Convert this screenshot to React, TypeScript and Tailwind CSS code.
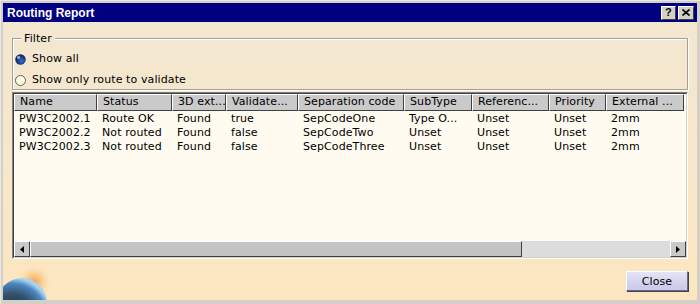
import React from "react";

const COLUMNS = [
  { label: "Name", w: "w-[83px]" },
  { label: "Status", w: "w-[75px]" },
  { label: "3D ext...", w: "w-[54px]" },
  { label: "Validate...", w: "w-[72px]" },
  { label: "Separation code", w: "w-[106px]" },
  { label: "SubType", w: "w-[68px]" },
  { label: "Referenc...", w: "w-[77px]" },
  { label: "Priority", w: "w-[57px]" },
  { label: "External ...", w: "w-[78px]" },
];

const ROWS = [
  ["PW3C2002.1", "Route OK", "Found", "true", "SepCodeOne", "Type O...", "Unset", "Unset", "2mm"],
  ["PW3C2002.2", "Not routed", "Found", "false", "SepCodeTwo", "Unset", "Unset", "Unset", "2mm"],
  ["PW3C2002.3", "Not routed", "Found", "false", "SepCodeThree", "Unset", "Unset", "Unset", "2mm"],
];

function Radio({ checked, label }: { checked?: boolean; label: string }) {
  return (
    <div className="h-[21px] flex items-center gap-[6px]">
      {checked ? (
        <svg width="11" height="11" viewBox="0 0 11 11">
          <defs>
            <radialGradient id="rb" cx="0.6" cy="0.65" r="0.7">
              <stop offset="0" stopColor="#3a70c8" />
              <stop offset="0.6" stopColor="#14357a" />
              <stop offset="1" stopColor="#0a1a40" />
            </radialGradient>
          </defs>
          <circle cx="5.5" cy="5.5" r="5.2" fill="url(#rb)" />
          <circle cx="3.6" cy="3.4" r="1.6" fill="#b8c8e0" opacity="0.8" />
        </svg>
      ) : (
        <svg width="11" height="11" viewBox="0 0 11 11">
          <circle cx="5.5" cy="5.5" r="5" fill="#fffbe0" stroke="#606060" strokeWidth="1" />
        </svg>
      )}
      <span>{label}</span>
    </div>
  );
}

function ArrowButton({ dir }: { dir: "left" | "right" }) {
  return (
    <div className="w-[16px] h-full bg-[#c8c8c8] border border-t-white border-l-white border-r-[#404040] border-b-[#404040] flex items-center justify-center">
      <svg width="4" height="7" viewBox="0 0 4 7">
        {dir === "left" ? <path d="M4 0 L0 3.5 L4 7 Z" fill="#000" /> : <path d="M0 0 L4 3.5 L0 7 Z" fill="#000" />}
      </svg>
    </div>
  );
}

export default function App() {
  return (
    <div className="w-[700px] h-[304px] bg-[#d4d0c8] border-t border-l border-t-[#e8e8e8] border-l-[#e8e8e8] flex flex-col pt-[2px] pl-[2px] pr-[3px] pb-[4px] font-['DejaVu_Sans',sans-serif] text-[11px] tracking-[0.1px] text-black">
      {/* title bar */}
      <div className="h-[19px] shrink-0 bg-[#000080] flex items-center justify-between pl-[4px] pr-[3px]">
        <span className="font-['Liberation_Sans',Arial,sans-serif] font-bold text-[12px] tracking-normal text-white leading-none">Routing Report</span>
        <div className="flex gap-[2px]">
          <div className="w-[15px] h-[14px] bg-[#d4d0c8] border border-t-white border-l-white border-r-[#404040] border-b-[#404040] flex items-center justify-center font-['Liberation_Sans',Arial,sans-serif] font-bold text-[11px] leading-none">
            ?
          </div>
          <div className="w-[16px] h-[14px] bg-[#d4d0c8] border border-t-white border-l-white border-r-[#404040] border-b-[#404040] flex items-center justify-center">
            <svg width="8" height="7" viewBox="0 0 8 7">
              <path d="M0.5 0.5 L7.5 6.5 M7.5 0.5 L0.5 6.5" stroke="#000" strokeWidth="1.6" />
            </svg>
          </div>
        </div>
      </div>

      {/* body */}
      <div className="relative flex-1 flex flex-col px-[9px] bg-gradient-to-b from-[#f3e7d0] via-[#f7e7cb] to-[#fde6bf] overflow-hidden">
        <svg className="absolute left-0 bottom-0" width="70" height="40" viewBox="0 0 70 40">
          <defs>
            <radialGradient id="glow" cx="0.5" cy="0.5" r="0.5">
              <stop offset="0" stopColor="#f59a38" stopOpacity="0.95" />
              <stop offset="0.45" stopColor="#f9bd72" stopOpacity="0.6" />
              <stop offset="1" stopColor="#fde6bf" stopOpacity="0" />
            </radialGradient>
            <radialGradient id="globe" cx="0.3" cy="0.8" r="0.8">
              <stop offset="0" stopColor="#1c2430" />
              <stop offset="0.6" stopColor="#34506c" />
              <stop offset="0.86" stopColor="#4a86bc" />
              <stop offset="1" stopColor="#a8d4f2" />
            </radialGradient>
          </defs>
          <circle cx="31" cy="22" r="18" fill="url(#glow)" />
          <circle cx="19" cy="43" r="25" fill="url(#globe)" />
        </svg>

        {/* filter group */}
        <div className="relative mt-[16px] h-[52px] shrink-0 border border-[#a0a0a0] shadow-[inset_1px_1px_0_#ffffff,1px_1px_0_#ffffff] pl-[2px] pt-[10px]">
          <span className="absolute -top-[7px] left-[8px] px-[3px] bg-[#f3e7d0] leading-[14px]">Filter</span>
          <Radio checked label="Show all" />
          <Radio label="Show only route to validate" />
        </div>

        {/* table */}
        <div className="relative mt-[2px] h-[167px] shrink-0 border border-t-[#808080] border-l-[#808080] border-r-white border-b-white">
          <div className="h-full border border-t-[#404040] border-l-[#404040] border-r-[#d4d0c8] border-b-[#d4d0c8] bg-[#fffbf0] flex flex-col">
            <div className="flex h-[17px] shrink-0">
              {COLUMNS.map((c) => (
                <div
                  key={c.label}
                  className={`${c.w} shrink-0 bg-[#cacaca] border border-t-white border-l-white border-r-[#404040] border-b-[#404040] pl-[5px] flex items-center whitespace-nowrap overflow-hidden`}
                >
                  {c.label}
                </div>
              ))}
            </div>
            <div className="flex-1 pt-[1px]">
              {ROWS.map((r) => (
                <div key={r[0]} className="flex h-[14px] items-center">
                  {r.map((v, i) => (
                    <div key={i} className={`${COLUMNS[i].w} shrink-0 pl-[5px] whitespace-nowrap overflow-hidden`}>
                      {v}
                    </div>
                  ))}
                </div>
              ))}
            </div>
            {/* horizontal scrollbar */}
            <div className="h-[16px] shrink-0 flex">
              <ArrowButton dir="left" />
              <div className="w-[492px] h-full bg-[#c4c4c4] border border-t-white border-l-white border-r-[#404040] border-b-[#404040]" />
              <div className="flex-1 h-full bg-[#dcdcdc]" />
              <ArrowButton dir="right" />
            </div>
          </div>
        </div>

        {/* footer */}
        <div className="flex justify-end mt-[12px]">
          <button className="w-[62px] h-[20px] bg-gradient-to-b from-[#e4e4f8] to-[#c8c8e8] border border-t-white border-l-white border-r-[#6a6a80] border-b-[#6a6a80] shadow-[1px_1px_0_#404050] text-[11px] leading-none">
            Close
          </button>
        </div>
      </div>
    </div>
  );
}
